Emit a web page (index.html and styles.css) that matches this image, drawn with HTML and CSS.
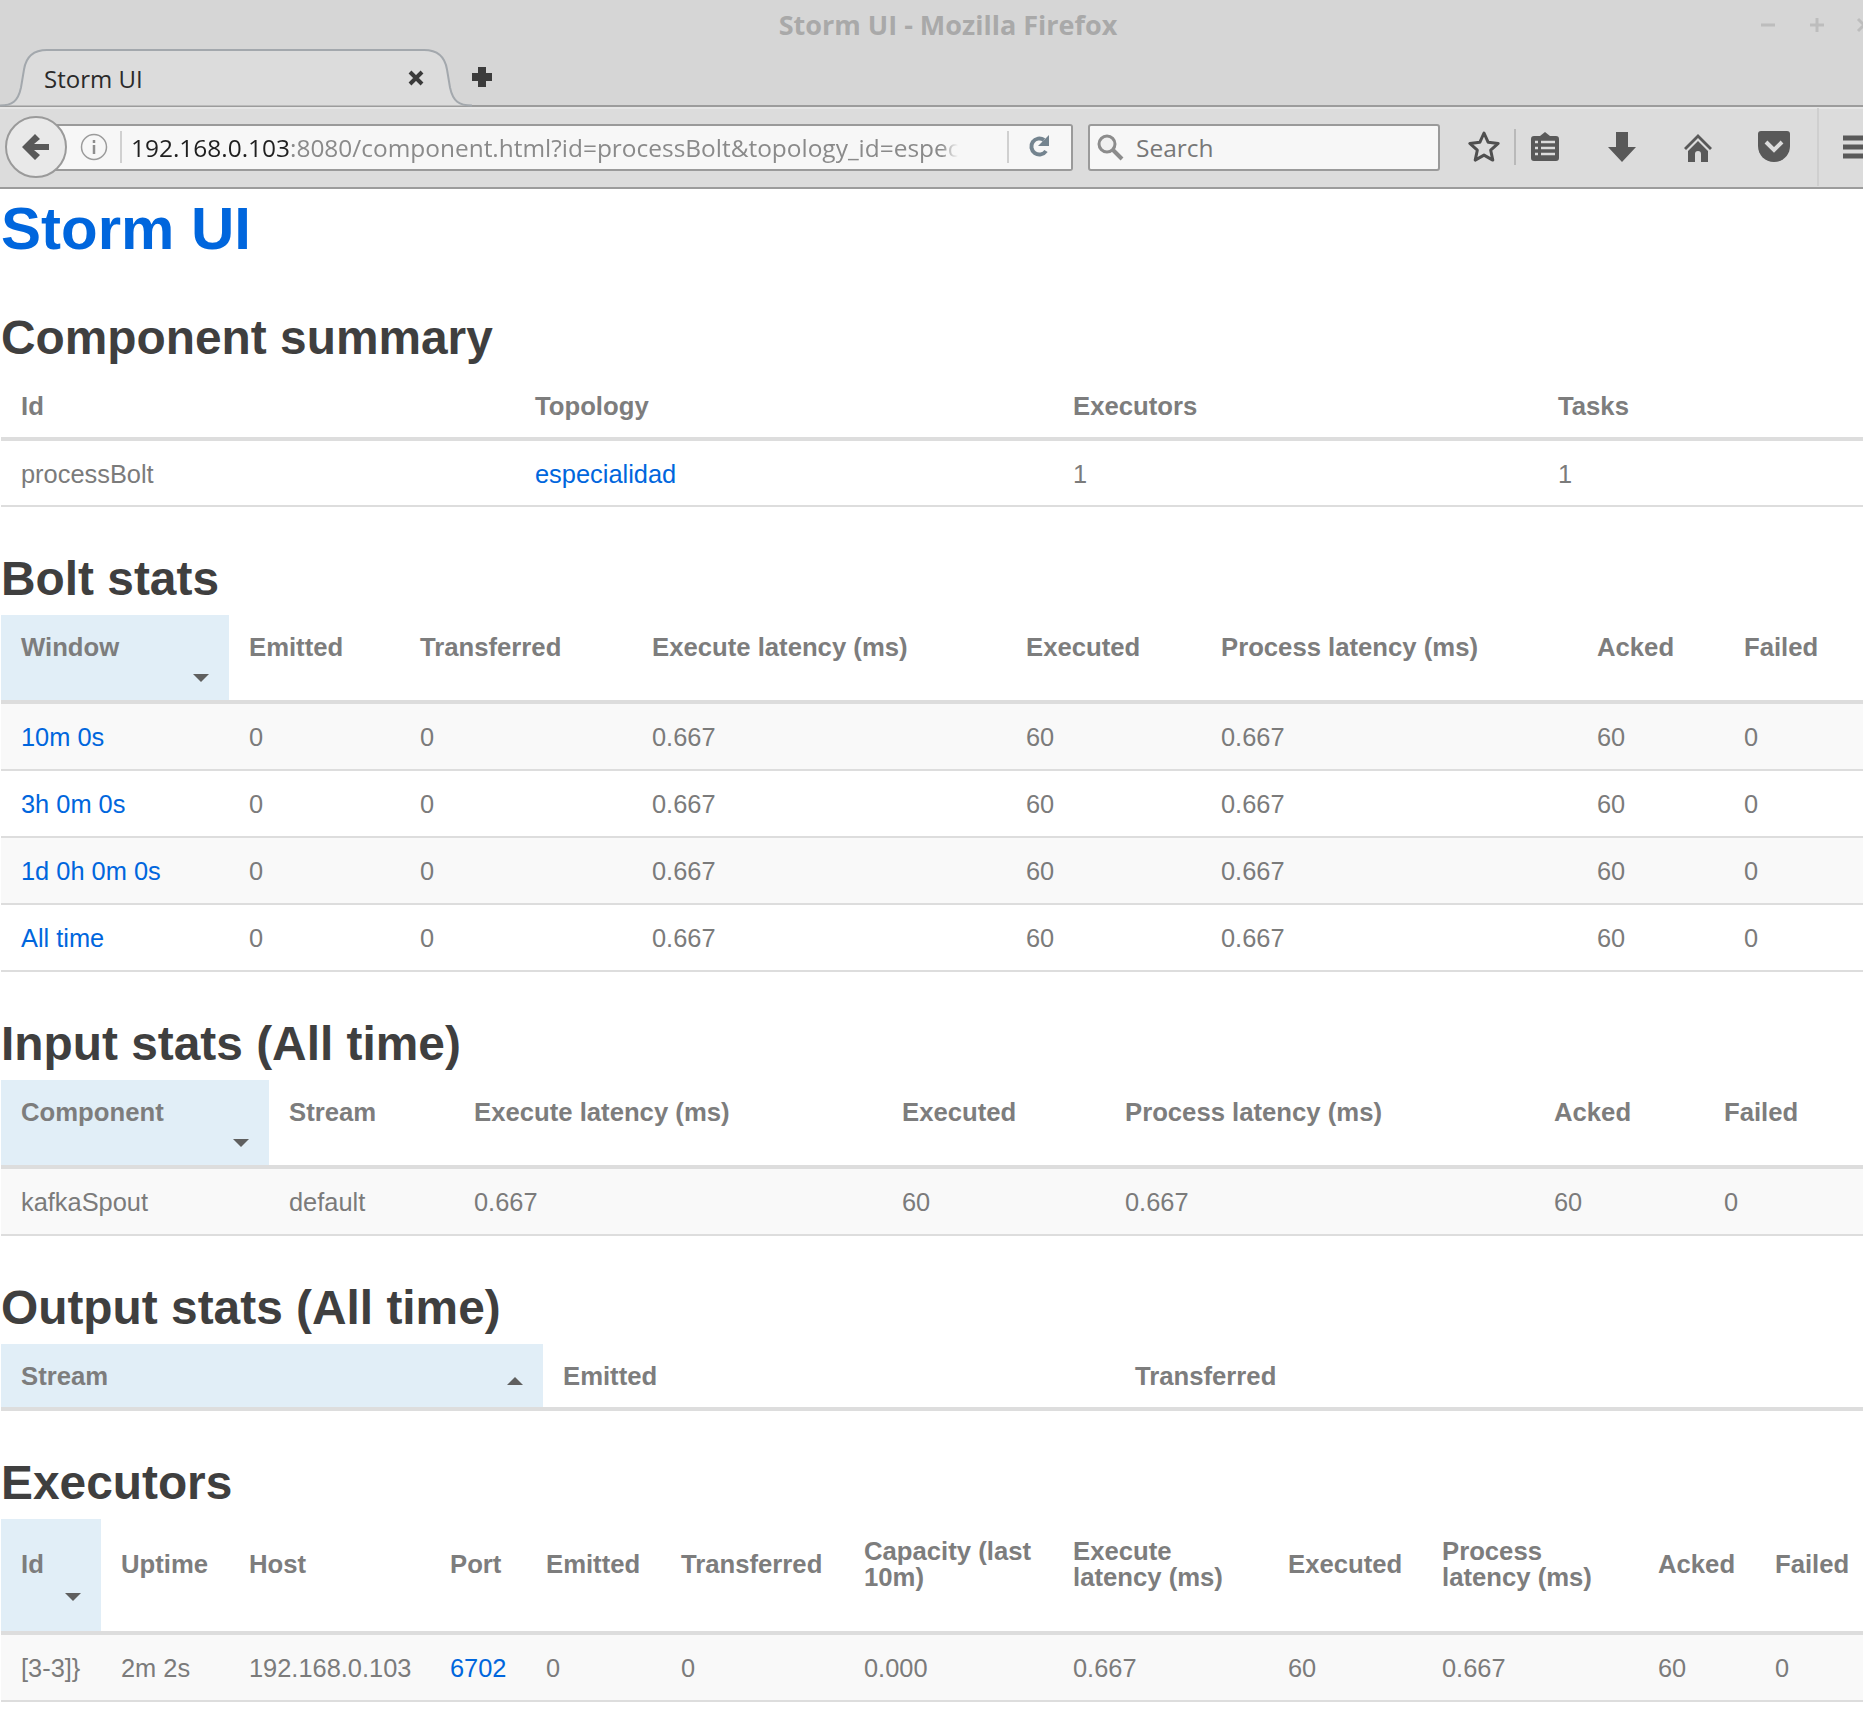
FILE: index.html
```html
<!DOCTYPE html>
<html lang="en">
<head>
<meta charset="utf-8">
<title>Storm UI</title>
<link rel="stylesheet" href="styles.css">
</head>
<body>
<header class="browser">
  <div class="titlebar">
    <div class="title">Storm UI - Mozilla Firefox</div>
    <div class="winctl">
      <svg class="wc wc-min" width="16" height="16" viewBox="0 0 16 16"><path d="M1 8h14" stroke="#bdbdbd" stroke-width="3"/></svg>
      <svg class="wc wc-max" width="16" height="16" viewBox="0 0 16 16"><path d="M1 8h14M8 1v14" stroke="#bdbdbd" stroke-width="3"/></svg>
      <svg class="wc wc-close" width="16" height="16" viewBox="0 0 16 16"><path d="M2 2l12 12M14 2L2 14" stroke="#bdbdbd" stroke-width="3"/></svg>
    </div>
  </div>
  <div class="tabstrip">
    <svg class="tabshape" width="490" height="58" viewBox="0 0 490 58"><path d="M0 56.500c12 0 18-4 21-18l3-18C26 8 33 1 47 1h377c14 0 21 7 23 19.500l3 18c3 14 9 18 22 18" fill="#dcdcdc" stroke="#a3a8ad" stroke-width="2"/></svg>
    <span class="tabtitle">Storm UI</span>
    <svg class="tabclose" width="18" height="18" viewBox="0 0 18 18"><path d="M3 3l12 12M15 3L3 15" stroke="#3a3a3a" stroke-width="4"/></svg>
    <svg class="tabnew" width="22" height="22" viewBox="0 0 22 22"><path d="M7 1h8v6h6v8h-6v6H7v-6H1V7h6z" fill="#3c3c3c"/></svg>
  </div>
  <div class="toolbar">
    <div class="back">
      <svg width="30" height="28" viewBox="0 0 30 28"><path d="M14 1l5 5-6 5h15v6H13l6 5-5 5L1 14z" fill="#595959"/></svg>
    </div>
    <div class="urlbar">
      <svg class="info" width="28" height="28" viewBox="0 0 28 28"><circle cx="14" cy="14" r="12.500" fill="none" stroke="#9b9b9b" stroke-width="1.500"/><path d="M14 7v3M14 12v9" stroke="#8e8e8e" stroke-width="2.500"/></svg>
      <i class="vsep"></i>
      <div class="url"><span class="host">192.168.0.103</span>:8080/component.html?id=processBolt&amp;topology_id=especialidad</div>
      <i class="vsep vsep-r"></i>
      <svg class="reload" width="26" height="26" viewBox="0 0 26 26"><path d="M20 17a8 8 0 1 1-2-11" fill="none" stroke="#74848f" stroke-width="4"/><path d="M23 1v11H12z" fill="#74848f"/></svg>
    </div>
    <div class="searchbar">
      <svg width="28" height="28" viewBox="0 0 28 28"><circle cx="11" cy="11" r="8" fill="#f0f0f0" stroke="#8c8c8c" stroke-width="3"/><path d="M17 17l9 9" stroke="#8c8c8c" stroke-width="4"/></svg>
      <span>Search</span>
    </div>
    <svg class="tool t-star" width="34" height="34" viewBox="0 0 34 34"><path d="M17 3l4.200 9.300 10 1.100-7.500 6.800 2.100 9.900L17 25.100l-8.800 5 2.100-9.900-7.500-6.800 10-1.100z" fill="none" stroke="#4f4f4f" stroke-width="3" stroke-linejoin="round"/></svg>
    <i class="tsep"></i>
    <svg class="tool t-list" width="30" height="34" viewBox="0 0 30 34"><path d="M4 6h6l5-4 5 4h6a3 3 0 0 1 3 3v19a3 3 0 0 1-3 3H4a3 3 0 0 1-3-3V9a3 3 0 0 1 3-3z" fill="#595959"/><path d="M5 12h3M11 12h14M5 18h3M11 18h14M5 24h3M11 24h14" stroke="#dcdcdc" stroke-width="2.500"/></svg>
    <svg class="tool t-down" width="30" height="34" viewBox="0 0 30 34"><path d="M9 2h12v15h8L15 32 1 17h8z" fill="#595959"/></svg>
    <svg class="tool t-home" width="32" height="34" viewBox="0 0 32 34"><path d="M16 4L2 18l2 2L16 8l12 12 2-2z" fill="#595959"/><path d="M16 11L6 21v11h7v-8a3 3 0 0 1 6 0v8h7V21z" fill="#595959"/></svg>
    <svg class="tool t-pocket" width="34" height="34" viewBox="0 0 34 34"><path d="M4 1h26a3 3 0 0 1 3 3v12c0 9-7 16-16 16S1 25 1 16V4a3 3 0 0 1 3-3z" fill="#595959"/><path d="M9 12l8 8 8-8" fill="none" stroke="#dcdcdc" stroke-width="4"/></svg>
    <i class="tsep tsep-tall"></i>
    <svg class="tool t-menu" width="26" height="28" viewBox="0 0 26 28"><path d="M2 5h30M2 14h30M2 23h30" stroke="#595959" stroke-width="5"/></svg>
  </div>
</header>

<main class="page">
  <h1><a href="#">Storm UI</a></h1>

  <h2>Component summary</h2>
  <table class="grid compact summary">
    <colgroup><col class="s1"><col class="s2"><col class="s3"><col></colgroup>
    <thead><tr><th>Id</th><th>Topology</th><th>Executors</th><th>Tasks</th></tr></thead>
    <tbody><tr><td>processBolt</td><td><a href="#">especialidad</a></td><td>1</td><td>1</td></tr></tbody>
  </table>

  <h2>Bolt stats</h2>
  <table class="grid tall striped">
    <colgroup><col class="b1"><col class="b2"><col class="b3"><col class="b4"><col class="b5"><col class="b6"><col class="b7"><col></colgroup>
    <thead><tr><th class="sorted desc">Window</th><th>Emitted</th><th>Transferred</th><th>Execute latency (ms)</th><th>Executed</th><th>Process latency (ms)</th><th>Acked</th><th>Failed</th></tr></thead>
    <tbody>
      <tr><td><a href="#">10m 0s</a></td><td>0</td><td>0</td><td>0.667</td><td>60</td><td>0.667</td><td>60</td><td>0</td></tr>
      <tr><td><a href="#">3h 0m 0s</a></td><td>0</td><td>0</td><td>0.667</td><td>60</td><td>0.667</td><td>60</td><td>0</td></tr>
      <tr><td><a href="#">1d 0h 0m 0s</a></td><td>0</td><td>0</td><td>0.667</td><td>60</td><td>0.667</td><td>60</td><td>0</td></tr>
      <tr><td><a href="#">All time</a></td><td>0</td><td>0</td><td>0.667</td><td>60</td><td>0.667</td><td>60</td><td>0</td></tr>
    </tbody>
  </table>

  <h2>Input stats (All time)</h2>
  <table class="grid tall striped">
    <colgroup><col class="i1"><col class="i2"><col class="i3"><col class="i4"><col class="i5"><col class="i6"><col></colgroup>
    <thead><tr><th class="sorted desc">Component</th><th>Stream</th><th>Execute latency (ms)</th><th>Executed</th><th>Process latency (ms)</th><th>Acked</th><th>Failed</th></tr></thead>
    <tbody><tr><td>kafkaSpout</td><td>default</td><td>0.667</td><td>60</td><td>0.667</td><td>60</td><td>0</td></tr></tbody>
  </table>

  <h2>Output stats (All time)</h2>
  <table class="grid compact">
    <colgroup><col class="o1"><col class="o2"><col></colgroup>
    <thead><tr><th class="sorted asc">Stream</th><th>Emitted</th><th>Transferred</th></tr></thead>
  </table>

  <h2>Executors</h2>
  <table class="grid exec striped">
    <colgroup><col class="e1"><col class="e2"><col class="e3"><col class="e4"><col class="e5"><col class="e6"><col class="e7"><col class="e8"><col class="e9"><col class="e10"><col class="e11"><col></colgroup>
    <thead><tr><th class="sorted desc one">Id</th><th class="one">Uptime</th><th class="one">Host</th><th class="one">Port</th><th class="one">Emitted</th><th class="one">Transferred</th><th>Capacity (last 10m)</th><th>Execute latency (ms)</th><th class="one">Executed</th><th>Process latency (ms)</th><th class="one">Acked</th><th class="one">Failed</th></tr></thead>
    <tbody><tr><td>[3-3]}</td><td>2m 2s</td><td>192.168.0.103</td><td><a href="#">6702</a></td><td>0</td><td>0</td><td>0.000</td><td>0.667</td><td>60</td><td>0.667</td><td>60</td><td>0</td></tr></tbody>
  </table>
</main>
</body>
</html>
```
FILE: styles.css
```css
* { box-sizing: border-box; }
html, body { margin: 0; padding: 0; background: #fff; }
body { width: 1863px; height: 1715px; overflow: hidden; font-family: "Liberation Sans", Arial, sans-serif; }

/* browser chrome */
.browser { font-family: "Open Sans", "Noto Sans", sans-serif; }
.titlebar { height: 50px; background: #d6d6d6; display: flex; align-items: center; justify-content: center; position: relative; padding: 0 0 2px 33px; }
.title { font-size: 27px; font-weight: 700; color: #a9a9a9; }
.winctl { position: absolute; top: 17px; left: 0; width: 1863px; height: 16px; }
.wc { position: absolute; top: 0; }
.wc-min { left: 1760px; }
.wc-max { left: 1809px; }
.wc-close { left: 1856px; }

.tabstrip { height: 57px; background: #d6d6d6; border-bottom: 2px solid #9c9c9c; position: relative; display: flex; align-items: center; }
.tabshape { position: absolute; left: 0; top: -1px; }
.tabtitle { position: relative; margin: 2px 0 0 44px; font-size: 24px; color: #2a2a2a; width: 363px; }
.tabclose { position: relative; }
.tabnew { position: relative; margin-left: 46px; margin-top: -2px; }

.toolbar { height: 82px; background: #dcdcdc; border-top: 2px solid #e6e6e6; border-bottom: 2px solid #9c9c9c; display: flex; align-items: center; position: relative; padding: 0 0 2px 5px; }
.back { width: 62px; height: 62px; border-radius: 50%; background: #e9e9e9; border: 2px solid #9a9a9a; display: flex; align-items: center; justify-content: center; position: relative; z-index: 1; margin-right: -16px; flex: none; }
.urlbar { width: 1022px; height: 47px; background: #f7f7f7; border: 2px solid #9a9a9a; border-left: 0; border-radius: 0 3px 3px 0; display: flex; align-items: center; padding-left: 29px; flex: none; }
.info { flex: none; }
.vsep { width: 2px; height: 32px; background: #d0d0d0; margin: 0 9px 0 12px; flex: none; }
.vsep-r { margin: 0; }
.url { width: 827px; font-size: 24.450px; color: #8a8a8a; white-space: nowrap; overflow: hidden; margin-right: 49px; flex: none; -webkit-mask-image: linear-gradient(to right, #000 98%, transparent); mask-image: linear-gradient(to right, #000 98%, transparent); }
.host { color: #1f1f1f; }
.reload { margin-left: 17px; flex: none; }
.searchbar { width: 352px; height: 47px; margin-left: 15px; background: #f7f7f7; border: 2px solid #9a9a9a; border-radius: 3px; display: flex; align-items: center; padding-left: 6px; font-size: 24.500px; color: #777; gap: 12px; flex: none; }
.tool { flex: none; }
.t-star { margin-left: 27px; }
.tsep { width: 2px; height: 36px; background: #b9b9b9; margin-left: 13px; flex: none; }
.t-list { margin-left: 14px; }
.t-down { margin-left: 47px; }
.t-home { margin-left: 45px; }
.t-pocket { margin-left: 43px; }
.tsep-tall { height: 78px; background: #cfcfcf; margin-left: 26px; }
.t-menu { margin-left: 22px; }

/* page */
h1 { margin: 4px 0 0; font-size: 60px; line-height: 72px; font-weight: 700; padding-left: 1px; }
h1 a { color: #0066dd; text-decoration: none; }
h2 { margin: 46px 0 10px; font-size: 47.850px; line-height: 52px; font-weight: 700; color: #3f3f3f; padding-left: 1px; }
h1 + h2 { margin-top: 47px; }

.grid { margin-left: 1px; width: 1862px; border-collapse: collapse; table-layout: fixed; font-size: 25.400px; line-height: 36px; color: #7b7b7b; }
.grid th { text-align: left; font-size: 25.700px; font-weight: 700; color: #7d7d7d; padding: 14px 20px; border-bottom: 4px solid #ddd; position: relative; vertical-align: top; }
.grid td { padding: 15px 20px 14px; border-bottom: 2px solid #ddd; white-space: nowrap; }
.grid a { color: #0066dd; text-decoration: none; }
.striped tbody tr:nth-child(odd) { background: #f9f9f9; }
.tall th { padding-bottom: 35px; }
.compact th { padding-bottom: 13px; }
.compact td { padding-bottom: 13px; }
.summary { margin-bottom: 1px; }

.sorted { background: #e1eef7; }
.sorted::after { content: ""; position: absolute; right: 20px; width: 0; height: 0; border-left: 8px solid transparent; border-right: 8px solid transparent; }
.desc::after { bottom: 18px; border-top: 8px solid #5f5f5f; }
.asc::after { bottom: 22px; border-bottom: 8px solid #5f5f5f; }

.exec th { line-height: 26px; padding: 19px 20px 41px; }
.exec th.one { line-height: 52px; }
.exec .desc::after { bottom: 30px; }

.s1 { width: 514px; } .s2 { width: 538px; } .s3 { width: 485px; }
.b1 { width: 228px; } .b2 { width: 171px; } .b3 { width: 232px; } .b4 { width: 374px; } .b5 { width: 195px; } .b6 { width: 376px; } .b7 { width: 147px; }
.i1 { width: 268px; } .i2 { width: 185px; } .i3 { width: 428px; } .i4 { width: 223px; } .i5 { width: 429px; } .i6 { width: 170px; }
.o1 { width: 542px; } .o2 { width: 572px; }
.e1 { width: 100px; } .e2 { width: 128px; } .e3 { width: 201px; } .e4 { width: 96px; } .e5 { width: 135px; } .e6 { width: 183px; } .e7 { width: 209px; } .e8 { width: 215px; } .e9 { width: 154px; } .e10 { width: 216px; } .e11 { width: 117px; }
```
